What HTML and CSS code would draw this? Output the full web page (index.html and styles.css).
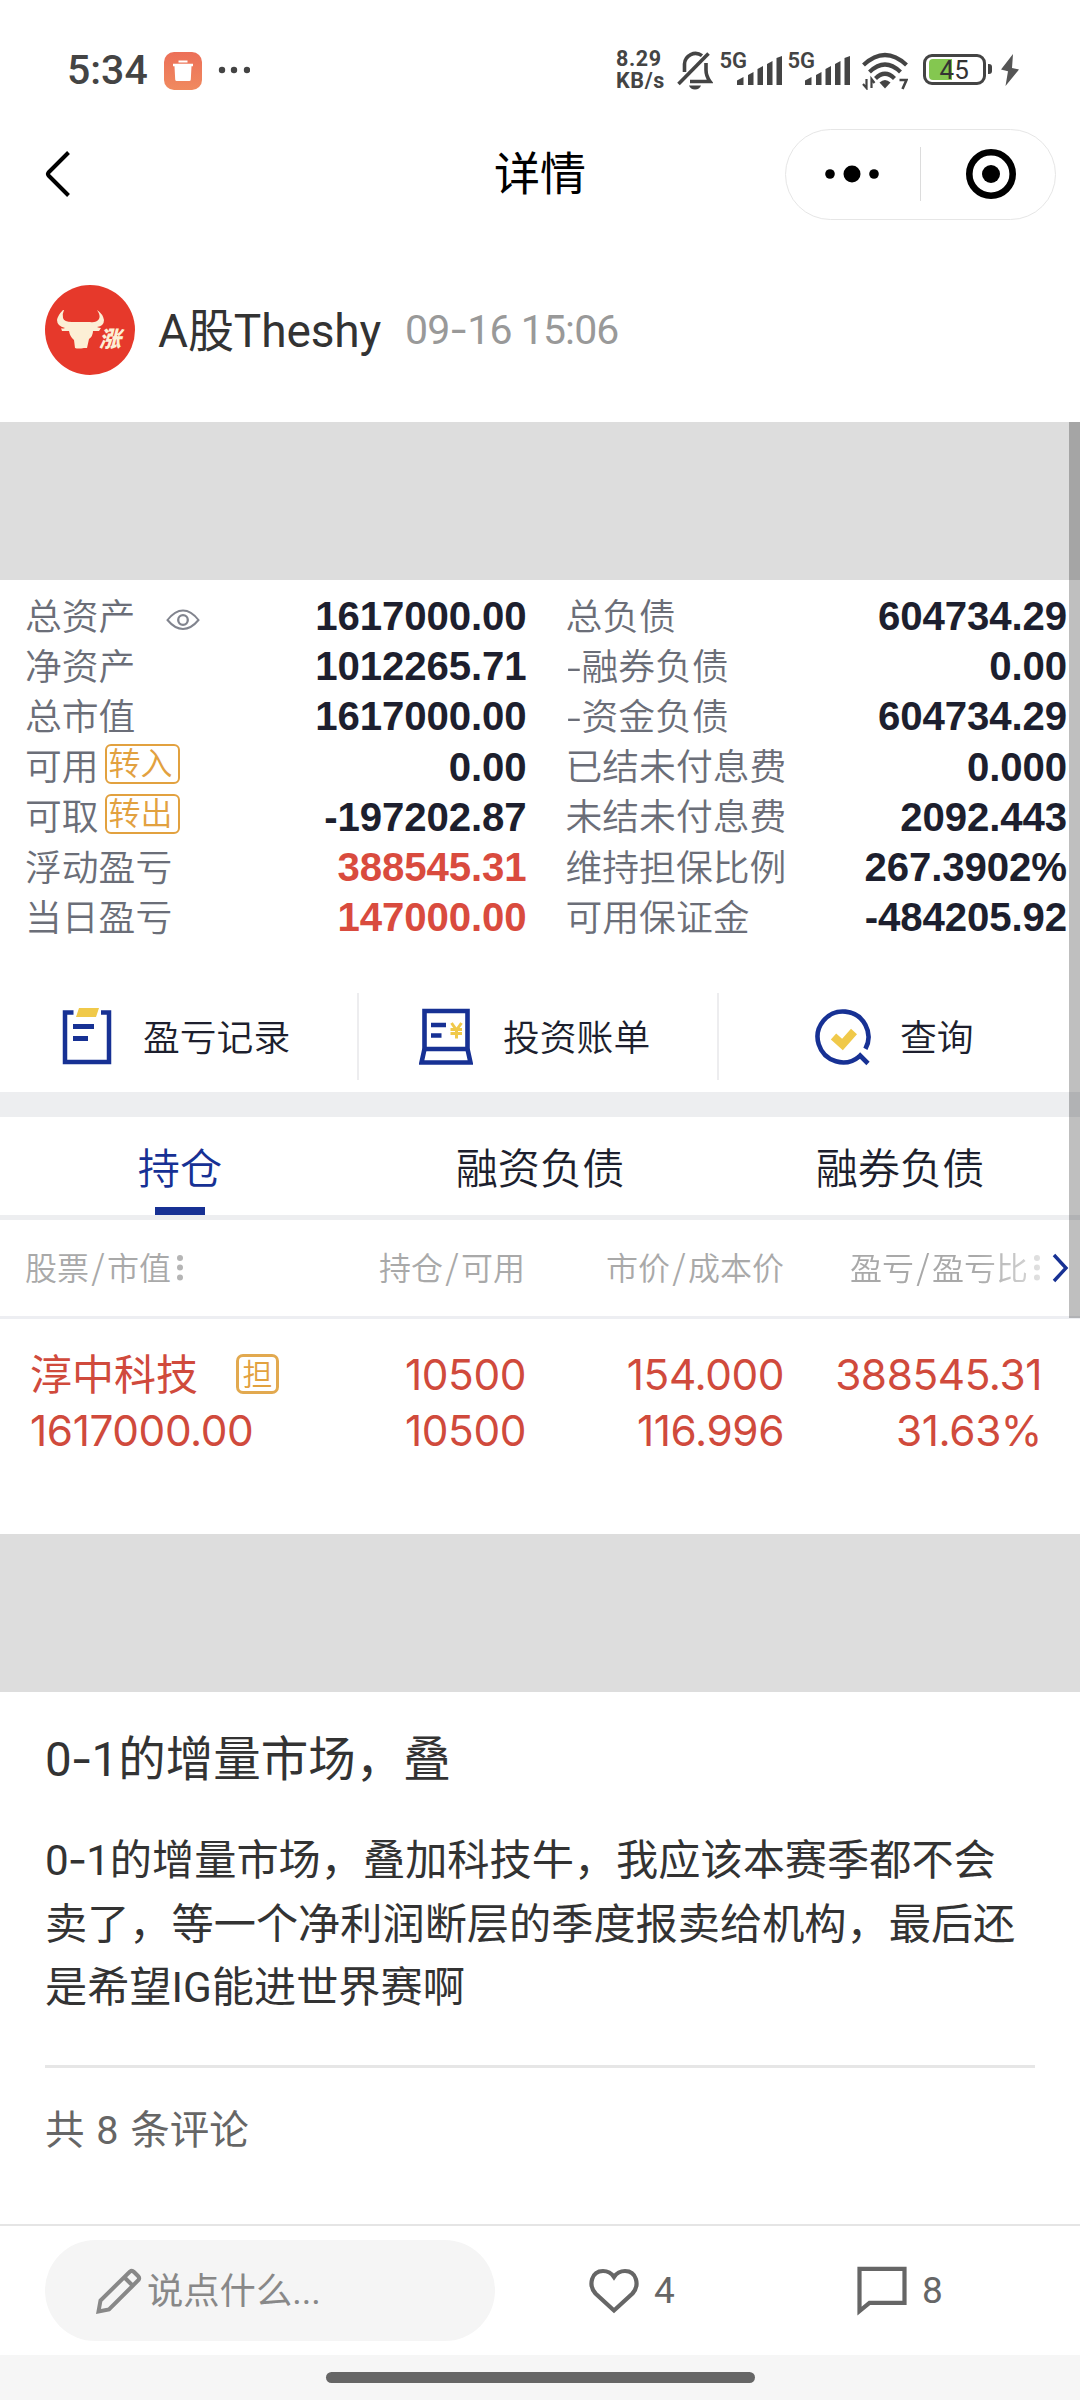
FILE: index.html
```html
<!DOCTYPE html>
<html lang="zh-CN">
<head>
<meta charset="utf-8">
<title>详情</title>
<link rel="stylesheet" href="styles.css">
</head>
<body>
<div class="screen">
  <header class="status">
    <span class="clock">5:34</span>
    <svg class="app-badge" width="38" height="38" viewBox="0 0 38 38"><defs><linearGradient id="g" x1="0" y1="0" x2="0" y2="1"><stop offset="0" stop-color="#ec6f58"/><stop offset="1" stop-color="#f08a5f"/></linearGradient></defs><rect width="38" height="38" rx="10" fill="url(#g)"/><path d="M14.500 8.500h9v2h-9zM9 11.800h20v2.400h-1.500l-.7 13.300q-.1 1.500-1.500 1.500h-12.600q-1.400 0-1.500-1.500l-.7-13.300H9z" fill="#fff"/></svg>
    <svg class="more" width="32" height="8" viewBox="0 0 32 8" fill="#444"><circle cx="4" cy="4" r="3.200"/><circle cx="16" cy="4" r="3.200"/><circle cx="29" cy="4" r="3.200"/></svg>
    <span class="speed"><span>8.29</span><span>KB/s</span></span>
    <svg class="bell" width="36" height="40" viewBox="0 0 36 40" fill="none" stroke="#444" stroke-width="3.600"><path d="M25 4.600A11 11 0 0 0 7.500 13V21M29 12v7q0 6 4 11.500H13" /><path d="M1.500 33L31.500 2.500"/><path d="M12 34.500h12q-1.500 4-6 4t-6-4z" fill="#444" stroke="none"/></svg>
    <span class="signal"><span class="net">5G</span><svg width="46" height="29" viewBox="0 0 46 29" fill="#444"><path d="M0 24.500l6.500-3.500v8H0zM11 19l5.500-3v13H11zM20.500 13l5.500-3v19h-5.500zM30 8l5.500-3v24H30zM39.500 2L45 0v29h-5.500z"/></svg></span>
    <span class="signal"><span class="net">5G</span><svg width="46" height="29" viewBox="0 0 46 29" fill="#444"><path d="M0 24.500l6.500-3.500v8H0zM11 19l5.500-3v13H11zM20.500 13l5.500-3v19h-5.500zM30 8l5.500-3v24H30zM39.500 2L45 0v29h-5.500z"/></svg></span>
    <svg class="wifi" width="46" height="38" viewBox="0 0 46 38"><g fill="none" stroke="#444" stroke-width="4.200"><path d="M1.500 13Q23-7 44.500 13"/><path d="M7.500 20Q23 5 38.500 20"/><path d="M13.500 26.500Q23 17 32.500 26.500"/></g><path d="M17.500 30.500q5.500-5 11 0L23 36.500z" fill="#444"/><path d="M4.500 27v9L1 32M9.500 36v-9l3 4" fill="none" stroke="#444" stroke-width="2.200"/><path d="M37.500 28h7l-4 9" fill="none" stroke="#444" stroke-width="2.600"/></svg>
    <span class="battery"><span class="level"></span><span class="pct">45</span></span>
    <svg class="bolt" width="20" height="32" viewBox="0 0 20 32"><path d="M13 0L1 15.500l7 1.800L5.500 32 19 15.500l-7-1.500z" fill="#555"/></svg>
  </header>

  <nav class="titlebar">
    <svg class="back" width="26" height="48" viewBox="0 0 26 48" fill="none" stroke="#000" stroke-width="4"><path d="M23.500 2.500L3.500 22.500q-1.200 1.500 0 3L23.500 45.500" stroke-linejoin="round"/></svg>
    <h1>详情</h1>
    <div class="capsule">
      <svg width="56" height="20" viewBox="0 0 56 20"><circle cx="6" cy="10" r="4.800"/><circle cx="28" cy="10" r="8.500"/><circle cx="50" cy="10" r="4.800"/></svg>
      <i></i>
      <svg width="52" height="52" viewBox="0 0 52 52"><circle cx="26" cy="26" r="21.700" fill="none" stroke="#000" stroke-width="6.600"/><circle cx="26" cy="26" r="9"/></svg>
    </div>
  </nav>

  <section class="author">
    <svg class="avatar" width="90" height="90" viewBox="0 0 90 90"><circle cx="45" cy="45" r="45" fill="#e6392b"/><path d="M18 25q-5 5-6 10 0 6 8 8-3 1-4 0l1 3h7q1 6 5 9l1 8q3 1 9 0l3 0 2-9q4-3 4-8h6l2-3q-2 0-4-1 7-1 7-7-1-6-7-10 4 6 2 9-3 4-9 3l-9 0-9 0q-8 0-9-4-1-4 1-8z" fill="#fcefd5"/><text x="54" y="62" class="avatar-text">涨</text></svg>
    <span class="name">A股Theshy</span>
    <time>09<i class="dash">-</i>16 15:06</time>
  </section>

  <main class="shot">
    <div class="pad"></div>
    <div class="assets">
      <div class="col left">
        <div class="row"><span class="k">总资产</span><svg class="eye" width="34" height="22" viewBox="0 0 34 22" fill="none" stroke="#81848e" stroke-width="2"><path d="M1.500 11Q9 1.500 17 1.500T32.500 11Q25 20 17 20T1.500 11z"/><circle cx="17" cy="11" r="4.800" stroke-width="2.300"/></svg><b>1617000.00</b></div>
        <div class="row"><span class="k">净资产</span><b>1012265.71</b></div>
        <div class="row"><span class="k">总市值</span><b>1617000.00</b></div>
        <div class="row"><span class="k">可用</span><span class="tag">转入</span><b>0.00</b></div>
        <div class="row"><span class="k">可取</span><span class="tag">转出</span><b>-197202.87</b></div>
        <div class="row"><span class="k">浮动盈亏</span><b class="up">388545.31</b></div>
        <div class="row"><span class="k">当日盈亏</span><b class="up">147000.00</b></div>
      </div>
      <div class="col right">
        <div class="row"><span class="k">总负债</span><b>604734.29</b></div>
        <div class="row"><span class="k"><i>-</i>融券负债</span><b>0.00</b></div>
        <div class="row"><span class="k"><i>-</i>资金负债</span><b>604734.29</b></div>
        <div class="row"><span class="k">已结未付息费</span><b>0.000</b></div>
        <div class="row"><span class="k">未结未付息费</span><b>2092.443</b></div>
        <div class="row"><span class="k">维持担保比例</span><b>267.3902%</b></div>
        <div class="row"><span class="k">可用保证金</span><b>-484205.92</b></div>
      </div>
    </div>

    <div class="tools">
      <div class="tool t1"><svg width="50" height="57" viewBox="0 0 50 57"><path d="M11.500 4.500H3v49.500h44V4.500h-8" fill="none" stroke="#173194" stroke-width="4.500"/><path d="M17 0h20l-3 9h-20z" fill="#f0c94a"/><path d="M11 18.500h21M11 30.500h15" stroke="#173194" stroke-width="4.800"/></svg><span>盈亏记录</span></div>
      <div class="tool t2"><svg width="54" height="57" viewBox="0 0 54 57"><path d="M5.500 41V3h43v38z" fill="none" stroke="#173194" stroke-width="4.600"/><path d="M5.500 41L2.500 54.500h49L48.500 41" fill="none" stroke="#173194" stroke-width="4.600"/><path d="M12 17h15M12 27.500h10.500" stroke="#173194" stroke-width="4.400"/><path d="M32.500 15l5 7 5-7M31.500 21.500h11.500M31.500 25.500h11.500M37.500 21v9.500" fill="none" stroke="#f0c94a" stroke-width="3"/></svg><span>投资账单</span></div>
      <div class="tool t3"><svg width="58" height="58" viewBox="0 0 58 58"><path d="M50.400 40.900A25.400 25.400 0 1 0 44.300 48.400" fill="none" stroke="#173194" stroke-width="4.600"/><path d="M43.500 46L53 55.500" stroke="#173194" stroke-width="4.600"/><path d="M18.500 28.500l9 8 11.500-13" fill="none" stroke="#f0c94a" stroke-width="8"/></svg><span>查询</span></div>
    </div>
    <div class="band"></div>
    <div class="tabs"><span class="on">持仓</span><span>融资负债</span><span>融券负债</span></div>
    <div class="cols">
      <span class="c1">股票<s>/</s>市值<svg width="8" height="28" viewBox="0 0 8 28" fill="#b5b5b5"><circle cx="4" cy="4" r="3"/><circle cx="4" cy="13.500" r="3"/><circle cx="4" cy="23.500" r="3"/></svg></span>
      <span>持仓<s>/</s>可用</span>
      <span>市价<s>/</s>成本价</span>
      <span class="c4">盈亏<s>/</s>盈亏比<svg width="8" height="28" viewBox="0 0 8 28" fill="#b5b5b5"><circle cx="4" cy="4" r="3"/><circle cx="4" cy="13.500" r="3"/><circle cx="4" cy="23.500" r="3"/></svg></span>
      <svg class="next" width="17" height="30" viewBox="0 0 17 30" fill="none" stroke="#173194" stroke-width="3.400"><path d="M2 2l12 13L2 28"/></svg>
    </div>
    <div class="holding">
      <span class="stock">淳中科技<em>担</em></span><span>10500</span><span>154.000</span><span>388545.31</span>
      <span class="val">1617000.00</span><span>10500</span><span>116.996</span><span>31.63%</span>
    </div>
    <div class="pad"></div>
    <div class="scrollbar"></div>
  </main>

  <article>
    <h2><span class="num">0<i class="dash">-</i>1</span>的增量市场，叠</h2>
    <p><span class="num">0<i class="dash">-</i>1</span>的增量市场，叠加科技牛，我应该本赛季都不会<br>卖了，等一个净利润断层的季度报卖给机构，最后还<br>是希望<span class="lat">IG</span>能进世界赛啊</p>
    <div class="comments">共 8 条评论</div>
  </article>

  <footer>
    <div class="input"><svg width="46" height="46" viewBox="0 0 46 46" fill="none" stroke="#888" stroke-width="4"><path d="M2.500 43.500l2-11L34 3.500q2-1.500 4 .5l4 4q2 2 .5 4L13 41.500zM28 9l9.500 9.500" /></svg><span>说点什么...</span></div>
    <div class="act like"><svg width="50" height="46" viewBox="0 0 50 46" fill="none" stroke="#666" stroke-width="4.200"><path d="M25 42.500L6.500 25.500C-1 17 2.500 3 14 3q7 0 11 6 4-6 11-6c11.500 0 15 14 7.500 22.500z"/></svg><span>4</span></div>
    <div class="act talk"><svg width="50" height="50" viewBox="0 0 50 50" fill="none" stroke="#666" stroke-width="4.200"><path d="M2.500 2.800h45v34H12.500L2.500 45z"/></svg><span>8</span></div>
  </footer>
  <div class="home"><i></i></div>
</div>
</body>
</html>
```
FILE: styles.css
```css
* { box-sizing: border-box; margin: 0; padding: 0; }
body { width: 1080px; background: #fff; font-family: Roboto, "Noto Sans CJK SC", sans-serif; color: #333; }
svg { display: block; flex: none; }
i, em, s { font-style: normal; text-decoration: none; }
.screen { width: 1080px; height: 2400px; display: flex; flex-direction: column; overflow: hidden; }

.status { height: 120px; padding: 0 60px 0 67px; display: flex; align-items: flex-start; color: #444; }
.clock { font-size: 41px; font-weight: 500; line-height: 40px; margin-top: 50px; width: 98px; letter-spacing: 0; }
.app-badge { margin-top: 52px; }
.more { margin: 66px 0 0 16px; }
.speed { margin: 48px 0 0 366px; width: 61px; display: flex; flex-direction: column; font-size: 21.500px; line-height: 22px; font-weight: 700; letter-spacing: .6px; white-space: nowrap; }
.bell { margin-top: 51px; }
.signal { display: flex; position: relative; width: 68px; margin-top: 56px; padding-left: 24px; }
.signal .net { position: absolute; left: 7px; top: -6px; font-size: 22px; line-height: 21px; font-weight: 600; }
.wifi { margin: 52px 0 0 13px; }
.battery { position: relative; width: 64px; height: 31px; margin: 54px 14px 0 15px; border: 3.500px solid #444; border-radius: 9px; }
.battery::after { content: ""; position: absolute; right: -9px; top: 7px; width: 4px; height: 10px; border-radius: 0 3px 3px 0; background: #444; }
.level { position: absolute; left: 3px; top: 2px; width: 23px; height: 21px; background: #84c750; border-radius: 4px 0 0 4px; }
.pct { position: absolute; left: 14px; top: 0; font-size: 26px; line-height: 26px; color: #333; }
.bolt { margin-top: 54px; }

.titlebar { height: 110px; padding: 0 24px 0 45px; display: grid; grid-template-columns: 271px 1fr 271px; align-items: center; }
.titlebar h1 { font-size: 46px; line-height: 60px; font-weight: 400; color: #000; text-align: center; padding-right: 21px; }
.titlebar .back, .titlebar h1, .capsule { margin-top: -2px; }
.capsule { height: 91px; border: 1.500px solid #e6e6e6; border-radius: 46px; display: flex; align-items: center; padding: 0 38px; justify-content: space-between; }
.capsule i { width: 1px; height: 54px; background: #dcdcdc; margin-right: 4px; }

.author { height: 192px; padding: 55px 0 0 45px; display: flex; align-items: flex-start; }
.avatar-text { font: italic 900 22px "Noto Sans CJK SC", sans-serif; fill: #fcefd5; }
.name { margin-left: 23px; font-size: 46px; line-height: 60px; margin-top: 16px; width: 225px; white-space: nowrap; letter-spacing: -.1px; }
time { margin-left: 22px; font-size: 41px; line-height: 60px; margin-top: 14px; color: #999; white-space: nowrap; letter-spacing: -.9px; }
.dash { font-family: Inter, sans-serif; }

.shot { position: relative; display: flex; flex-direction: column; font-family: "Liberation Sans", "Noto Sans CJK SC", sans-serif; }
.pad { height: 158px; background: #ddd; }
.scrollbar { position: absolute; right: 0; top: 0; width: 11px; height: 896px; background: rgba(0,0,0,.25); }
.assets { height: 404px; padding: 11px 13px 0 25px; display: flex; gap: 39px; }
.assets .left { width: 502px; }
.assets .right { width: 502px; }
.row { height: 50.200px; display: flex; align-items: center; color: #6b6e78; }
.k { font-size: 36.800px; line-height: 50px; font-weight: 350; white-space: nowrap; padding-bottom: 5px; font-family: "Noto Sans CJK SC", sans-serif; }
.k i { display: inline-block; width: 16px; transform: scaleX(1.25); transform-origin: 0 50%; }
.row b { margin-left: auto; font-size: 40.200px; line-height: 50px; color: #1d1f2e; padding-top: 2px; letter-spacing: -.1px; }
.row b.up { color: #d94b3e; }
.eye { margin-left: 31px; margin-top: 7px; }
.tag { margin-left: 6px; width: 75px; height: 40px; margin-top: -6px; border: 2px solid #e2a13f; border-radius: 6px; color: #e2a13f; font-size: 32px; line-height: 37px; font-weight: 350; padding-left: 2px; }

.tools { height: 108px; display: grid; grid-template-columns: 359px 360px 1fr; padding-top: 9px; align-items: start; }
.tool { height: 87px; display: flex; align-items: center; border-right: 2px solid #ededef; font-size: 36.800px; line-height: 50px; font-weight: 350; color: #1d1f2e; }
.tool span { padding-top: 5px; }
.t1 { padding-left: 62px; gap: 31px; }
.t2 { padding-left: 60px; gap: 30px; }
.t3 { padding-left: 96px; gap: 27px; border: 0; }
.band { height: 25px; background: #edeef0; }
.tabs { height: 103px; border-bottom: 5px solid #edeef0; display: grid; grid-template-columns: repeat(3, 1fr); text-align: center; font-size: 42.200px; line-height: 91px; color: #1d1f2e; font-weight: 350; }
.tabs span { position: relative; padding-top: 7px; }
.tabs .on { color: #173194; }
.tabs .on::after { content: ""; position: absolute; left: 155px; bottom: 0; width: 50px; height: 8px; background: #173194; }
.cols { height: 99px; border-bottom: 3px solid #edeef2; display: grid; grid-template-columns: 267px 258px 259px 257px 1fr; align-items: center; font-family: "Noto Sans CJK SC", sans-serif; font-size: 32px; line-height: 48px; font-weight: 350; color: #a9a9a9; }
.cols span { display: flex; justify-content: flex-end; align-items: center; white-space: nowrap; padding-bottom: 4px; }
.cols s { width: 18px; text-align: center; font-size: 34px; }
.cols .c1 { justify-content: flex-start; padding-left: 25px; }
.cols .c1 svg, .cols .c4 svg { margin: 3px 0 0 5px; }
.cols .c4 { -webkit-mask-image: linear-gradient(90deg, #000 75%, rgba(0,0,0,.4)); mask-image: linear-gradient(90deg, #000 75%, rgba(0,0,0,.4)); }
.next { margin-left: 11px; }
.holding { height: 215px; padding-top: 28px; display: grid; grid-template-columns: 267px 259px 258px 258px; grid-template-rows: 56px 56px; font: 42.300px/56px Inter, "Noto Sans CJK SC", sans-serif; color: #d04a3c; text-align: right; align-content: start; letter-spacing: -.4px; }
.stock, .val { text-align: left; padding-left: 30px; white-space: nowrap; }
.stock { display: flex; align-items: center; letter-spacing: 0; font-size: 42px; }
.stock em { flex: none; margin-left: 38px; width: 43px; height: 40px; border: 3px solid #e2a94f; border-radius: 7px; font-size: 30px; line-height: 34px; color: #e2a13f; text-align: center; font-weight: 350; margin-top: -3px; }

article { padding: 0 45px; display: flex; flex-direction: column; }
h2 { margin-top: 37px; font-size: 47.500px; line-height: 60px; font-weight: 400; white-space: nowrap; }
h2 .dash, p .dash { margin: 0 -1px; }
p { margin-top: 38px; font-size: 42.200px; line-height: 63.500px; white-space: nowrap; padding-bottom: 45px; border-bottom: 3px solid #e6e6e6; }
.comments { margin-top: 33px; height: 60px; line-height: 60px; font-size: 39.500px; color: #666; white-space: pre; word-spacing: 2px; }

footer { margin-top: auto; height: 131px; border-top: 2px solid #e5e5e5; padding: 14px 45px 0; display: flex; }
.input { width: 450px; height: 101px; border-radius: 51px; background: #f5f5f5; display: flex; align-items: center; padding-left: 51px; gap: 5px; font-size: 36.300px; color: #888; }
.input span { padding-bottom: 6px; }
.act { height: 101px; display: flex; align-items: center; font-size: 37px; color: #666; }
.act svg { margin-right: 15px; }
.like { margin-left: 94px; width: 268px; }
.home { height: 45px; background: #f6f6f6; display: flex; justify-content: center; padding-top: 17px; }
.home i { width: 429px; height: 11px; border-radius: 6px; background: #666; }
```
